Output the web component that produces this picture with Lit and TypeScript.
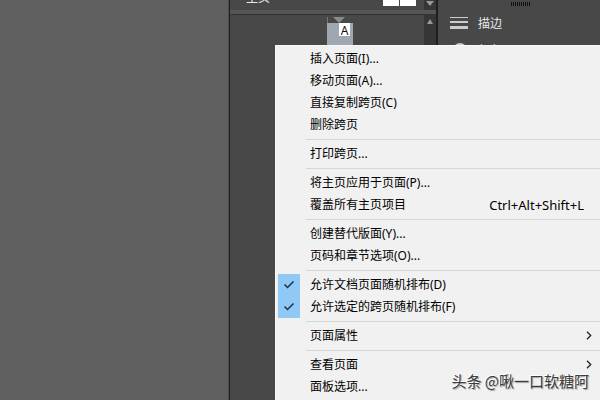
import { LitElement, html, css, nothing } from "lit";
import { customElement } from "lit/decorators.js";

interface Entry {
  label: string;
  shortcut?: string;
  checked?: boolean;
  submenu?: boolean;
}

const groups: Entry[][] = [
  [{ label: "插入页面(I)..." }, { label: "移动页面(A)..." }, { label: "直接复制跨页(C)" }, { label: "删除跨页" }],
  [{ label: "打印跨页..." }],
  [{ label: "将主页应用于页面(P)..." }, { label: "覆盖所有主页项目", shortcut: "Ctrl+Alt+Shift+L" }],
  [{ label: "创建替代版面(Y)..." }, { label: "页码和章节选项(O)..." }],
  [
    { label: "允许文档页面随机排布(D)", checked: true },
    { label: "允许选定的跨页随机排布(F)", checked: true },
  ],
  [{ label: "页面属性", submenu: true }],
  [{ label: "查看页面", submenu: true }, { label: "面板选项..." }],
];

@customElement("context-menu")
export class ContextMenu extends LitElement {
  static styles = css`
    :host {
      display: block;
      box-sizing: border-box;
      padding: 2px 0;
      background: #f1f1f1;
      border: 1px solid #f8f8f8;
      border-right: 0;
      color: #000;
    }
    .item {
      display: grid;
      grid-template-columns: 22px 1fr auto;
      column-gap: 10px;
      align-items: center;
      box-sizing: border-box;
      width: 100%;
      height: 22px;
      padding: 0 8px 0 2px;
      border: 0;
      background: none;
      color: inherit;
      font: 12px/22px "Noto Sans", "Noto Sans CJK SC", sans-serif;
      text-align: left;
      white-space: nowrap;
    }
    .item:hover { background: #91c9f7; }
    .mark { display: flex; align-items: center; justify-content: center; height: 22px; }
    .on { background: #90c8f6; }
    .shortcut { padding-right: 8px; font-size: 13px; line-height: 20px; }
    .rule { height: 1px; margin: 3px 0 3px 30px; border: 0; background: #d6d6d6; }
    svg { display: block; }
  `;

  private item(e: Entry) {
    return html`<button class="item" role=${e.checked ? "menuitemcheckbox" : "menuitem"} aria-checked=${e.checked ? "true" : nothing}>
      <span class="mark ${e.checked ? "on" : ""}">
        ${e.checked
          ? html`<svg width="12" height="10" viewBox="0 0 12 10"><path d="M1.5 4.5 4.5 7.5 10.5 1.5" fill="none" stroke="#17344d" stroke-width="1.5" /></svg>`
          : nothing}
      </span>
      <span>${e.label}</span>
      ${e.shortcut ? html`<span class="shortcut">${e.shortcut}</span>` : nothing}
      ${e.submenu
        ? html`<svg width="6" height="10" viewBox="0 0 6 10"><path d="M1 .8 4.7 4.5 1 8.2" fill="none" stroke="#222" stroke-width="1.3" /></svg>`
        : nothing}
    </button>`;
  }

  render() {
    return groups.map((g, i) => html`${i ? html`<hr class="rule" />` : nothing}${g.map((e) => this.item(e))}`);
  }
}

@customElement("app-root")
export class AppRoot extends LitElement {
  static styles = css`
    :host {
      display: flex;
      position: relative;
      min-height: 100vh;
      overflow: hidden;
      background: #484848;
      color: #e8e8e8;
      font: 12px/20px "Noto Sans", "Noto Sans CJK SC", sans-serif;
    }
    .canvas { flex: 1; background: #606060; border-right: 1px solid #4e4e4e; }
    .pages {
      display: grid;
      grid-template: 10px 4px 1fr / 1fr 12px;
      box-sizing: border-box;
      width: 209px;
      border: solid #1f1f1f;
      border-width: 0 2px 0 1px;
      background: #484848;
    }
    .masters { display: flex; justify-content: space-between; align-items: flex-end; overflow: hidden; }
    .name { padding: 0 0 2px 16px; }
    .spread { display: flex; gap: 1px; height: 6px; margin: 0 8px 4px 0; }
    .sheet { width: 16px; background: #fff; }
    .divider { grid-column: 1 / -1; background: #555; }
    .bar { display: flex; flex-direction: column; align-items: center; background: #363636; }
    .list { border-top: 1px solid #333; }
    .thumb { width: 26px; margin: 2px 0 0 97px; }
    .page { display: flex; justify-content: flex-end; box-sizing: border-box; height: 40px; background: #9fa8b1; padding: 0 3px 0 0; }
    .letter { width: 11px; height: 13px; background: #fff; color: #111; font: 12px/15px "Noto Sans", sans-serif; text-align: center; }
    .dock { width: 162px; background: #484848; }
    .grip { width: 20px; height: 4px; margin: 2px 0 4px 73px; background: repeating-linear-gradient(90deg, #111 0 1px, #484848 1px 2px); }
    .tool {
      display: flex;
      align-items: center;
      gap: 10px;
      width: 100%;
      height: 27px;
      padding: 0 0 0 12px;
      border: 0;
      background: none;
      color: inherit;
      font: inherit;
    }
    svg { display: block; }
    .menu { position: absolute; top: 45px; right: 0; width: 325px; min-height: calc(100vh - 45px); }
    .watermark {
      position: absolute;
      right: 11px;
      bottom: 7px;
      color: #3c3c3c;
      font: 15px/24px "Noto Sans CJK SC", sans-serif;
      text-shadow: -1px -1px 0 #fff, 1px 1px 1px #999;
      white-space: nowrap;
    }
  `;

  render() {
    return html`
      <main class="canvas"></main>
      <section class="pages">
        <div class="masters">
          <span class="name">主页</span>
          <span class="spread"><i class="sheet"></i><i class="sheet"></i></span>
        </div>
        <div class="bar"><svg width="8" height="6" viewBox="0 0 8 6"><path d="M0 1h8L4 6z" fill="#999" /></svg></div>
        <div class="divider"></div>
        <div class="list">
          <div class="thumb">
            <svg width="26" height="6" viewBox="0 0 26 6"><path d="M6 0h12l-6 6z" fill="#8b8b8b" /><path d="M0 0h1v6H0z" fill="#777" /></svg>
            <div class="page"><span class="letter">A</span></div>
          </div>
        </div>
        <div class="bar list"><svg width="8" height="14" viewBox="0 0 8 14"><path d="M1 9h6L4 4z" fill="#999" /></svg></div>
      </section>
      <aside class="dock">
        <div class="grip"></div>
        <button class="tool">
          <svg width="18" height="13" viewBox="0 0 18 13"><path d="M0 0h18v1H0zM0 4h18v2H0zM0 9h18v3H0z" fill="#ccc" /></svg>
          <span>描边</span>
        </button>
        <button class="tool">
          <svg width="18" height="16" viewBox="0 0 18 16"><circle cx="10" cy="7" r="7" fill="#ccc" /></svg>
          <span>颜色</span>
        </button>
      </aside>
      <context-menu class="menu" role="menu"></context-menu>
      <div class="watermark">头条 @啾一口软糖阿</div>
    `;
  }
}
